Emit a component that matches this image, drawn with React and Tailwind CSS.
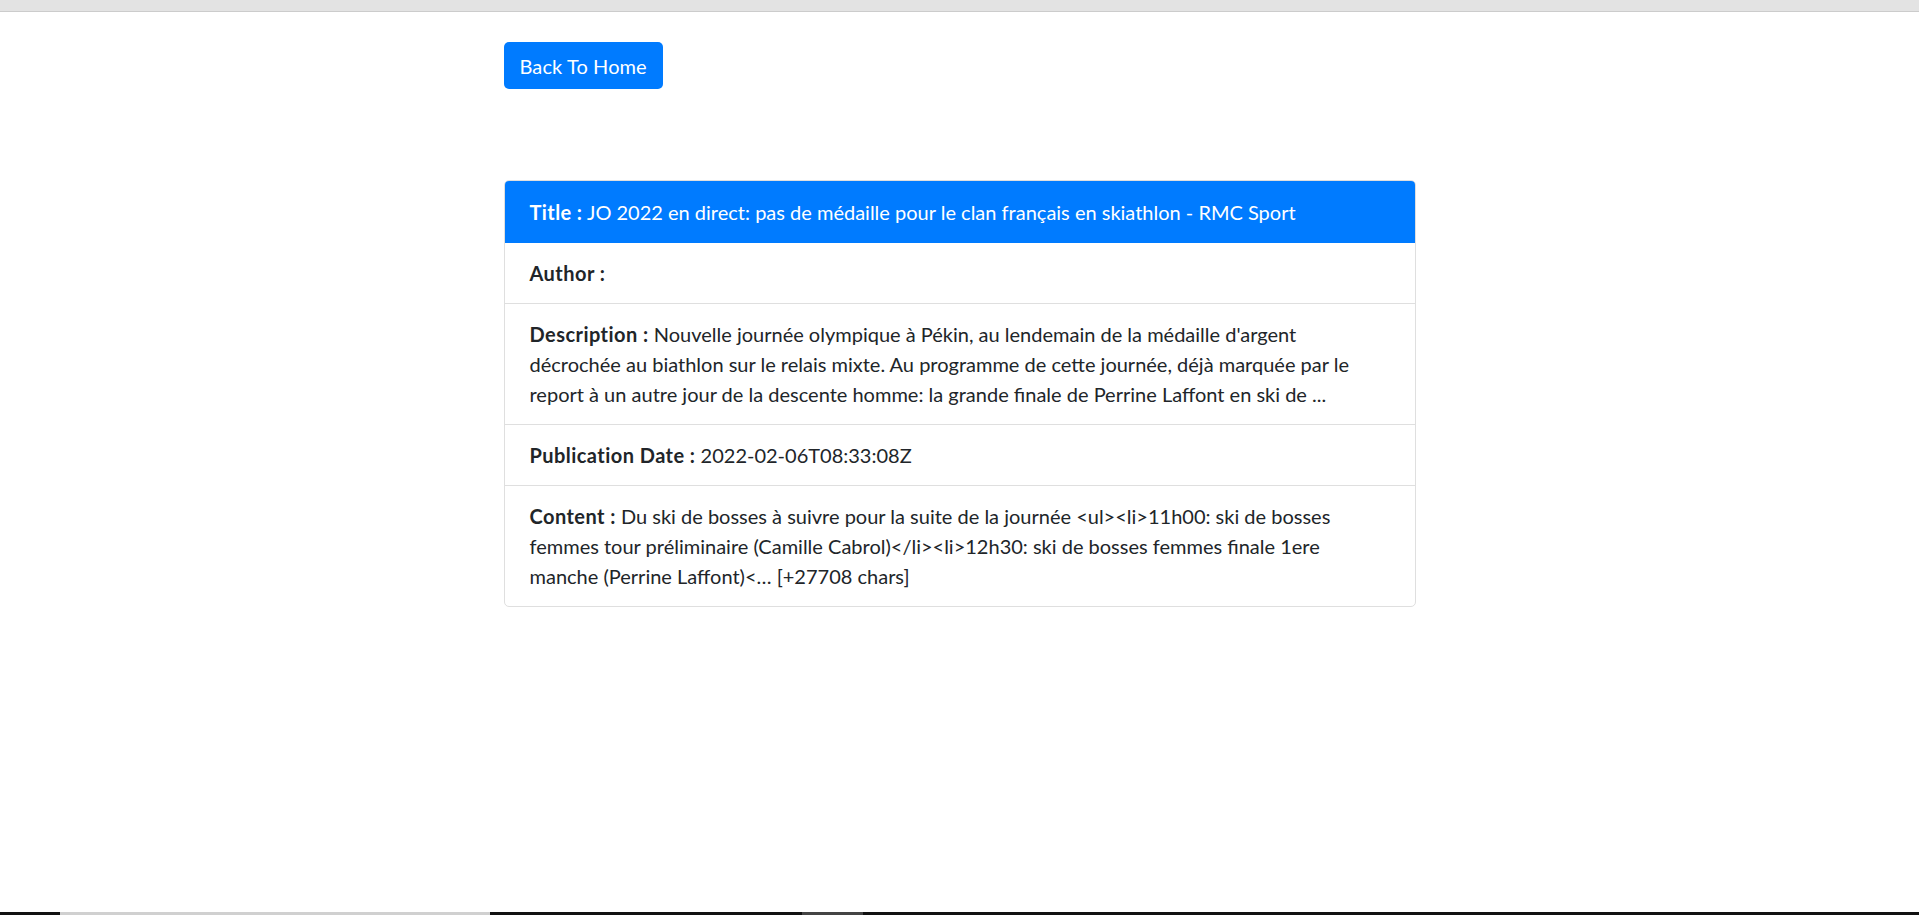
import React from "react";

const rows = [
  { label: "Author :", value: "" },
  {
    label: "Description :",
    value:
      "Nouvelle journée olympique à Pékin, au lendemain de la médaille d'argent décrochée au biathlon sur le relais mixte. Au programme de cette journée, déjà marquée par le report à un autre jour de la descente homme: la grande finale de Perrine Laffont en ski de ...",
  },
  { label: "Publication Date :", value: "2022-02-06T08:33:08Z" },
  {
    label: "Content :",
    value:
      "Du ski de bosses à suivre pour la suite de la journée <ul><li>11h00: ski de bosses femmes tour préliminaire (Camille Cabrol)</li><li>12h30: ski de bosses femmes finale 1ere manche (Perrine Laffont)<… [+27708 chars]",
  },
];

const App = () => {
  return (
    <div
      className="min-h-screen flex flex-col bg-white text-[#212529]"
      style={{ fontFamily: "Lato, 'Open Sans', sans-serif" }}
    >
      <div className="h-[12px] bg-[#e3e3e3] border-b border-[#cccccc]" />
      <div className="flex-1">
        <div className="w-[912px] mx-auto pt-[30px]">
          <button className="h-[47px] px-[16px] rounded-[5px] bg-[#007bff] text-white text-[20px] leading-[30px] tracking-[0.1px]">
            Back To Home
          </button>
          <div className="mt-[91px] border border-[#dfdfdf] rounded-[5px] overflow-hidden">
            <div className="bg-[#007bff] text-white text-[20px] leading-[30px] px-[25px] py-[16px]">
              <b className="font-bold tracking-[0.4px]">Title :</b> JO 2022 en direct: pas de médaille pour le clan français en skiathlon - RMC Sport
            </div>
            {rows.map((r, i) => (
              <div
                key={i}
                className={`text-[20px] leading-[30px] px-[25px] py-[15px] ${
                  i > 0 ? "border-t border-[#dfdfdf]" : ""
                }`}
              >
                <b className="font-bold tracking-[0.45px]">{r.label}</b> {r.value}
              </div>
            ))}
          </div>
        </div>
      </div>
      <div className="flex h-[3px]">
        <div className="w-[60px] bg-[#111]" />
        <div className="w-[430px] bg-[#d0d0d0]" />
        <div className="w-[312px] bg-[#111]" />
        <div className="w-[61px] bg-[#444]" />
        <div className="flex-1 bg-[#111]" />
      </div>
    </div>
  );
};

export default App;
